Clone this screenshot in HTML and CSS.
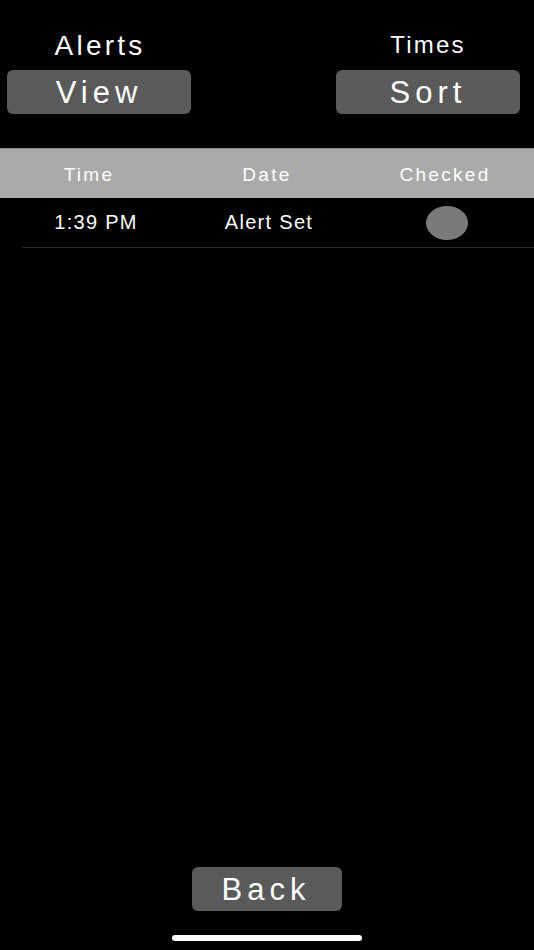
FILE: index.html
```html
<!DOCTYPE html>
<html>
<head>
<meta charset="utf-8">
<link rel="stylesheet" href="styles.css">
</head>
<body>
<div class="screen">
  <div class="top">
    <div class="group">
      <div class="label label-alerts">Alerts</div>
      <div class="btn">View</div>
    </div>
    <div class="group">
      <div class="label label-times">Times</div>
      <div class="btn">Sort</div>
    </div>
  </div>
  <div class="table">
    <div class="thead">
      <div class="th">Time</div>
      <div class="th">Date</div>
      <div class="th">Checked</div>
    </div>
    <div class="row">
      <div class="td td-time">1:39 PM</div>
      <div class="td td-date">Alert Set</div>
      <div class="td td-check"><span class="dot"></span></div>
    </div>
    <div class="sep"></div>
  </div>
  <div class="spacer"></div>
  <div class="bottom">
    <div class="btn btn-back">Back</div>
  </div>
  <div class="home"><span class="home-bar"></span></div>
</div>
</body>
</html>
```
FILE: styles.css
```css
html, body {
  margin: 0;
  padding: 0;
  background: #000;
}
.screen {
  width: 534px;
  height: 950px;
  display: flex;
  flex-direction: column;
  font-family: "Liberation Sans", Arial, sans-serif;
  color: #fff;
}
.top {
  display: flex;
  justify-content: space-between;
  padding: 30px 14px 0 7px;
}
.group {
  width: 184px;
  display: flex;
  flex-direction: column;
  align-items: center;
}
.label {
  height: 40px;
  line-height: 32px;
}
.label-alerts {
  font-size: 28px;
  letter-spacing: 3.2px;
  padding-left: 2px;
}
.label-times {
  font-size: 24px;
  line-height: 30px;
  letter-spacing: 2.2px;
}
.btn {
  width: 100%;
  height: 44px;
  background: #5a5a5a;
  border-radius: 6px;
  font-size: 31px;
  line-height: 46px;
  text-align: center;
  letter-spacing: 5px;
  box-sizing: border-box;
}
.table {
  margin-top: 34px;
}
.thead {
  display: grid;
  grid-template-columns: 1fr 1fr 1fr;
  height: 50px;
  background: #aaaaaa;
  border-top: 1px solid #8c8c8c;
  box-sizing: border-box;
  align-items: center;
}
.th {
  text-align: center;
  font-size: 19px;
  letter-spacing: 2.3px;
  padding-top: 2px;
}
.row {
  display: grid;
  grid-template-columns: 1fr 1fr 1fr;
  height: 49px;
  align-items: center;
}
.td {
  text-align: center;
  font-size: 20px;
  letter-spacing: 1.3px;
}
.td-time {
  padding-left: 14px;
}
.td-date {
  padding-left: 4px;
}
.td-check {
  display: flex;
  justify-content: center;
  padding-left: 4px;
}
.dot {
  display: block;
  width: 42px;
  height: 34px;
  border-radius: 50%;
  background: #7a7a7a;
}
.sep {
  height: 1px;
  margin-left: 22px;
  background: #2a2a2a;
}
.spacer {
  flex: 1;
}
.bottom {
  display: flex;
  justify-content: center;
}
.btn-back {
  width: 150px;
  padding-right: 2px;
}
.home {
  display: flex;
  justify-content: center;
  padding: 24px 0 9px;
}
.home-bar {
  display: block;
  width: 190px;
  height: 6px;
  border-radius: 3px;
  background: #fff;
}
```
